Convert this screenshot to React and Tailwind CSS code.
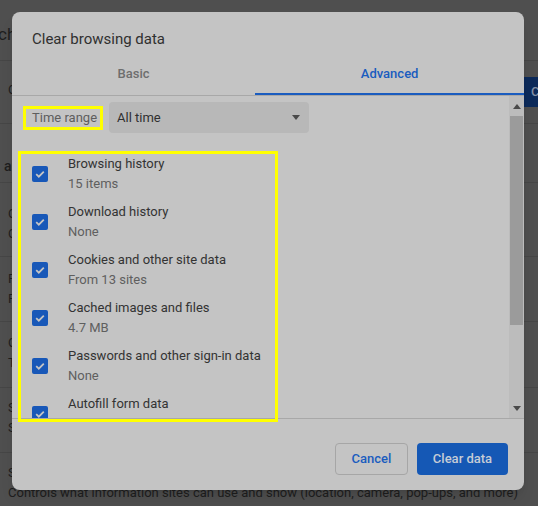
import React from 'react'

const items = [
  { title: 'Browsing history', sub: '15 items' },
  { title: 'Download history', sub: 'None' },
  { title: 'Cookies and other site data', sub: 'From 13 sites' },
  { title: 'Cached images and files', sub: '4.7 MB' },
  { title: 'Passwords and other sign-in data', sub: 'None' },
  { title: 'Autofill form data', sub: 'None' },
]

const Check = () => (
  <div className="w-[16px] h-[16px] rounded-[2px] bg-[#1858b8] flex items-center justify-center shrink-0">
    <svg width="12" height="12" viewBox="0 0 12 12">
      <path d="M2.2 6.2 L4.8 8.7 L9.8 3.6" fill="none" stroke="#c4c4c4" strokeWidth="1.8" />
    </svg>
  </div>
)

const Tri = ({ down }) => (
  <svg width="8" height="5" viewBox="0 0 8 5">
    <path d={down ? 'M0 0 L8 0 L4 5 Z' : 'M0 5 L8 5 L4 0 Z'} fill="#4a4a4a" />
  </svg>
)

const App = () => {
  return (
    <div className="relative w-[538px] h-[506px] overflow-hidden bg-[#4f4f4f] text-[#1e1e1e] font-['Roboto',sans-serif]">
      {/* dimmed settings page behind */}
      <div className="flex flex-col text-[13px] leading-[20px]">
        <div className="h-[61px] border-b border-[#464646] pt-[22px] -ml-[2px] text-[17px] leading-[24px] whitespace-nowrap">ch settings</div>
        <div className="h-[63px] border-b border-[#464646] flex items-start">
          <div className="pt-[19px] pl-[8px] whitespace-nowrap">Chrome can help keep you safe</div>
          <div className="ml-auto mt-[16px] h-[30px] w-[14px] overflow-hidden whitespace-nowrap bg-[#0c2a5a] text-[#8390a6] pl-[7px] flex items-center font-medium">Check now</div>
        </div>
        <div className="h-[59px] border-b border-[#464646] pt-[32px] pl-[4px] text-[14px] font-medium whitespace-nowrap">and security</div>
        <div className="h-[74px] border-b border-[#464646] pt-[21px] pl-[8px] whitespace-nowrap">
          <div>Clear browsing data</div>
          <div>Clear history, cookies, cache, and more</div>
        </div>
        <div className="h-[65px] border-b border-[#464646] pt-[12px] pl-[8px] whitespace-nowrap">
          <div>Privacy Guide</div>
          <div>Review key privacy and security controls</div>
        </div>
        <div className="h-[66px] border-b border-[#464646] pt-[11px] pl-[8px] whitespace-nowrap">
          <div>Cookies and other site data</div>
          <div>Third-party cookies are blocked in Incognito mode</div>
        </div>
        <div className="h-[65px] border-b border-[#464646] pt-[10px] pl-[8px] whitespace-nowrap">
          <div>Security</div>
          <div>Safe Browsing (protection from dangerous sites)</div>
        </div>
        <div className="pt-[10px] pl-[8px] whitespace-nowrap">
          <div>Site Settings</div>
          <div>Controls what information sites can use and show (location, camera, pop-ups, and more)</div>
        </div>
      </div>

      {/* dialog */}
      <div className="absolute left-[12px] top-[12px] w-[512px] h-[478px] rounded-[8px] bg-[#c4c4c4] shadow-lg flex flex-col overflow-hidden">
        <div className="h-[48px] pl-[20px] pt-[17px] text-[15px] leading-[20px] text-[#303030]">Clear browsing data</div>

        <div className="flex h-[36px] border-b border-[#a8a8a8] text-[13px] leading-[20px] font-medium">
          <div className="flex-auto flex justify-center pt-[4px] text-[#6e6e6e]">Basic</div>
          <div className="flex-auto flex justify-center pt-[4px] text-[#1a5cbf] relative">
            Advanced
            <div className="absolute left-0 right-0 bottom-0 h-[2px] bg-[#1a5cbf]"></div>
          </div>
        </div>

        <div className="h-[323px] border-b border-[#a8a8a8] flex">
          <div className="flex-1 overflow-hidden pl-[11px] pt-[6px]">
            <div className="flex items-center">
              <div className="w-[80px] h-[24px] border-[3px] border-[#ffff00] flex items-center pl-[6px] text-[13px] text-[#5e5e5e] whitespace-nowrap">Time range</div>
              <div className="ml-[6px] w-[200px] h-[31px] rounded-[4px] bg-[#b8b8b8] flex items-center pl-[8px] pr-[9px] text-[13px] text-[#303030]">
                <span className="flex-1">All time</span>
                <Tri down />
              </div>
            </div>

            <div className="mt-[21px] flex flex-col gap-[8px]">
              {items.map((it) => (
                <div key={it.title} className="h-[40px] flex items-center pl-[9px] shrink-0">
                  <Check />
                  <div className="ml-[20px] text-[13px] leading-[20px]">
                    <div className="text-[#333333]">{it.title}</div>
                    <div className="text-[#5f5f5f]">{it.sub}</div>
                  </div>
                </div>
              ))}
            </div>
          </div>

          {/* scrollbar */}
          <div className="w-[15px] bg-[#bcbcbc] flex flex-col">
            <div className="h-[20px] flex items-center justify-center"><Tri /></div>
            <div className="h-[209px] mx-[1px] bg-[#9b9b9b]"></div>
            <div className="flex-1"></div>
            <div className="h-[20px] flex items-center justify-center"><Tri down /></div>
          </div>
        </div>

        <div className="flex justify-end gap-[9px] pt-[24px] pr-[16px] text-[13px] font-medium">
          <button className="w-[73px] h-[32px] rounded-[4px] border border-[#a6a6a6] text-[#1a5cbf]">Cancel</button>
          <button className="w-[91px] h-[32px] rounded-[4px] bg-[#1558b5] text-[#c6ccd6]">Clear data</button>
        </div>

        {/* highlight box */}
        <div className="absolute left-[6px] top-[139px] w-[260px] h-[271px] border-[3px] border-[#ffff00] pointer-events-none"></div>
      </div>
    </div>
  )
}

export default App
